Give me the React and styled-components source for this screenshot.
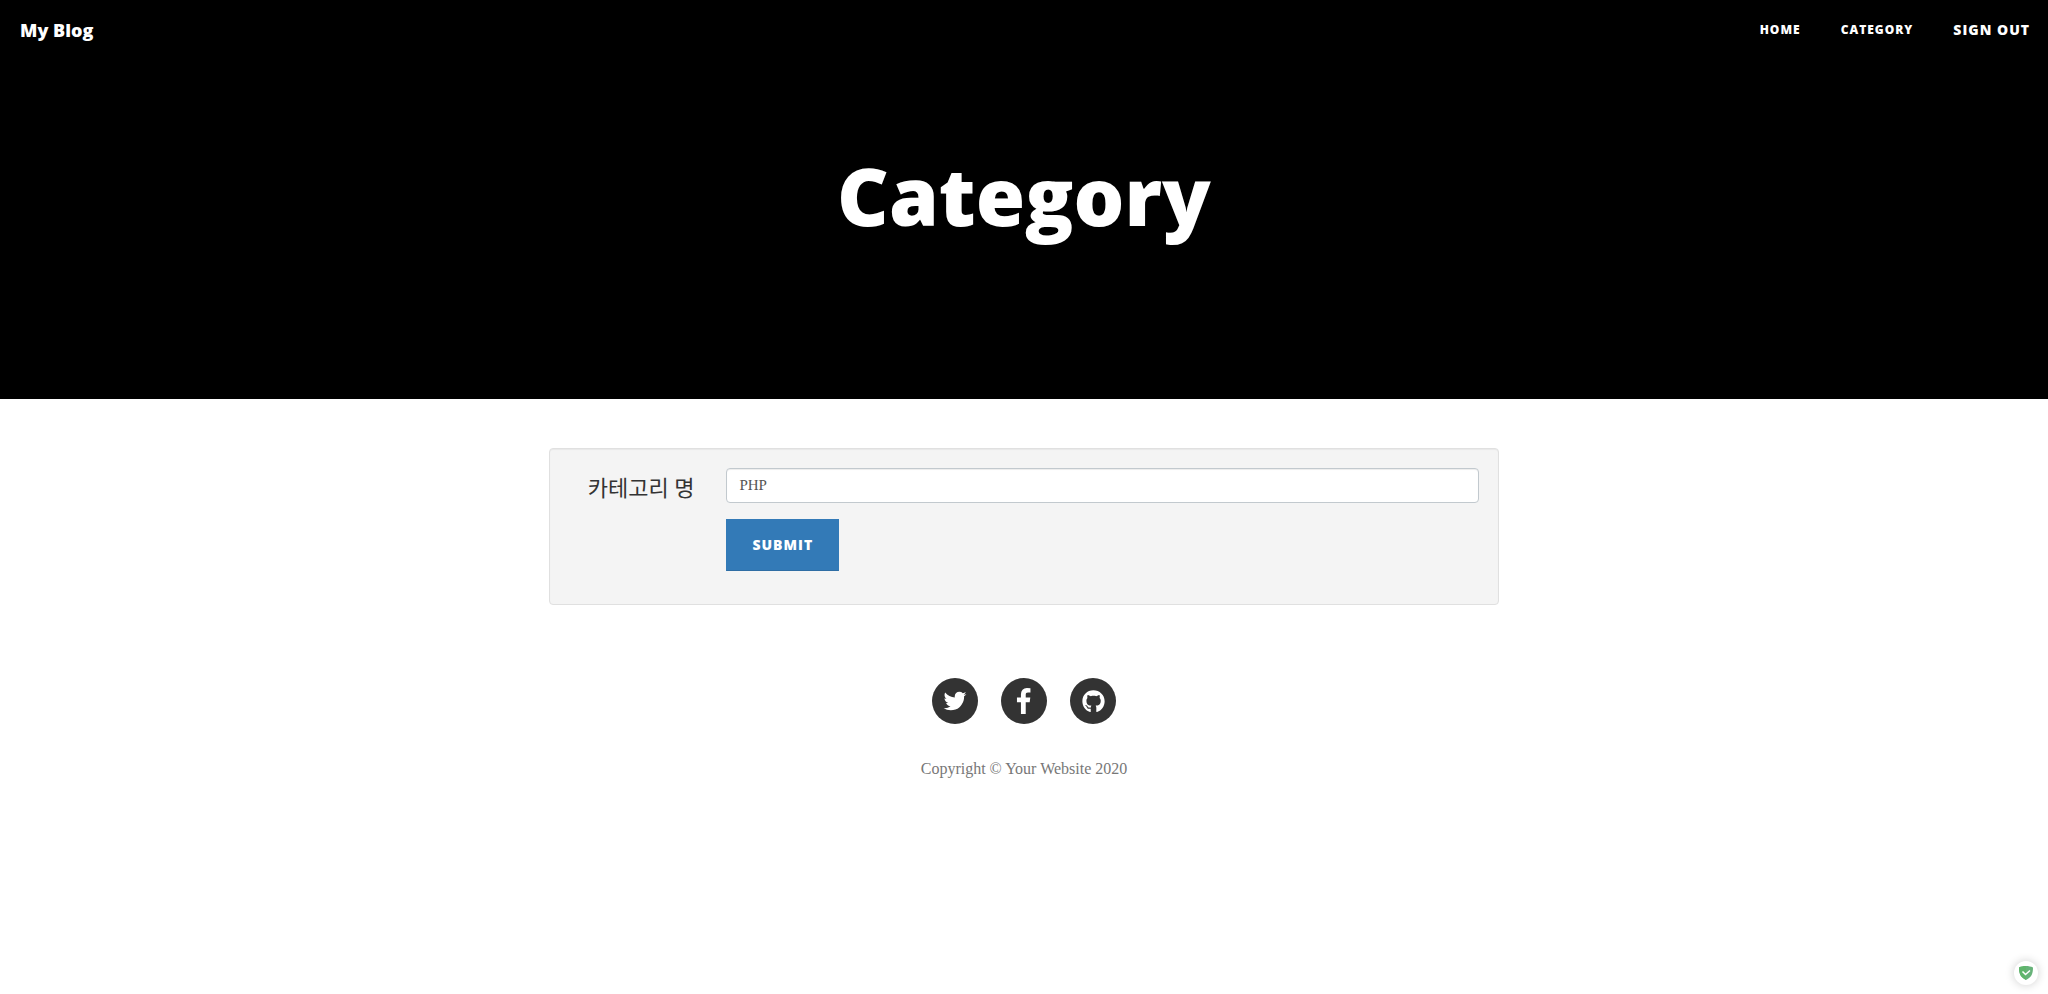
import React from "react";
import styled, { createGlobalStyle, css } from "styled-components";
import { FaGithub } from "react-icons/fa";

const GlobalStyle = createGlobalStyle`
  *, *::before, *::after { box-sizing: border-box; }
  body {
    margin: 0;
    background: #fff;
    color: #333;
    font-family: "Liberation Serif", "Noto Sans CJK KR", serif;
    font-size: 20px;
  }
`;

const display = css`
  font-family: "Open Sans", sans-serif;
  font-weight: 800;
`;

const Masthead = styled.header`
  background: #000;
  color: #fff;
`;

const NavBar = styled.nav`
  ${display}
  display: flex;
  align-items: center;
  justify-content: space-between;
  height: 60px;
  padding: 0 18px 0 20px;
`;

const Brand = styled.a`
  color: #fff;
  font-size: 18px;
  line-height: 20px;
  text-decoration: none;
`;

const NavList = styled.ul`
  display: flex;
  align-items: center;
  gap: 40px;
  margin: 0;
  padding: 0;
  list-style: none;
`;

const NavLink = styled.a`
  display: block;
  color: #fff;
  font-size: ${(p) => (p.$large ? 14 : 12)}px;
  line-height: 20px;
  letter-spacing: 1px;
  text-transform: uppercase;
  text-decoration: none;
`;

const Title = styled.h1`
  ${display}
  margin: 0;
  padding: 91px 16px 160px;
  font-size: 80px;
  line-height: 88px;
  text-align: center;
`;

const Main = styled.main`
  max-width: 982px;
  margin: 0 auto;
  padding: 49px 16px 0;
`;

const Well = styled.form`
  display: grid;
  grid-template-columns: 1fr 6fr;
  column-gap: 32px;
  row-gap: 16px;
  padding: 19px 19px 33px;
  background: #f4f4f4;
  border: 1px solid #e0e0e0;
  border-radius: 4px;
  box-shadow: inset 0 1px 1px rgba(0, 0, 0, 0.05);
`;

const Label = styled.label`
  padding-top: 7px;
  font-size: 22px;
  line-height: 28px;
  text-align: right;
  white-space: nowrap;
`;

const Field = styled.input`
  width: 100%;
  height: 35px;
  padding: 6px 12px;
  border: 1px solid #c2c9ce;
  border-radius: 4px;
  background: #fff;
  box-shadow: inset 0 1px 1px rgba(0, 0, 0, 0.075);
  color: #555;
  font: inherit;
  font-size: 15px;
`;

const Submit = styled.button`
  ${display}
  grid-column: 2;
  justify-self: start;
  padding: 15px 25px;
  border: 1px solid #337ab7;
  border-bottom-color: #2e6da4;
  background: #337ab7;
  color: #fff;
  font-size: 14px;
  line-height: 20px;
  letter-spacing: 1px;
  text-transform: uppercase;
`;

const Footer = styled.footer`
  display: flex;
  flex-direction: column;
  align-items: center;
  gap: 33px;
  padding: 73px 16px 65px;
`;

const Socials = styled.ul`
  display: flex;
  gap: 23px;
  margin: 0;
  padding: 0;
  list-style: none;
`;

const SocialLink = styled.a`
  display: flex;
  align-items: center;
  justify-content: center;
  width: 46px;
  height: 46px;
  border-radius: 50%;
  background: #333;
  color: #fff;

  svg {
    width: ${(p) => p.$iconSize}px;
    height: ${(p) => p.$iconSize}px;
    fill: currentColor;
  }
`;

const Copyright = styled.p`
  margin: 0;
  color: #777;
  font-size: 16px;
  line-height: 24px;
`;

const ShieldBadge = styled.button`
  position: fixed;
  right: 10px;
  bottom: 9px;
  display: flex;
  align-items: center;
  justify-content: center;
  width: 24px;
  height: 24px;
  padding: 0;
  border: 0;
  border-radius: 50%;
  background: #fff;
  box-shadow: 0 0 10px rgba(0, 0, 0, 0.2);
`;

const TwitterIcon = () => (
  <svg viewBox="0 0 1792 1792" aria-hidden="true">
    <path d="M1684 408q-67 98-162 167 1 14 1 42 0 130-38 259.500t-115.500 248.500-184.500 210.500-258 146-323 54.500q-271 0-496-145 35 4 78 4 225 0 401-138-105-2-188-64.500t-114-159.500q33 5 61 5 43 0 85-11-112-23-185.500-111.500t-73.500-205.500v-4q68 38 146 41-66-44-105-115t-39-154q0-88 44-163 121 149 294.500 238.500t371.500 99.500q-8-38-8-74 0-134 94.500-228.500t228.500-94.500q140 0 236 102 109-21 205-78-37 115-142 178 93-10 186-50z" />
  </svg>
);

const FacebookIcon = () => (
  <svg viewBox="-350 -70 1792 1792" aria-hidden="true">
    <path d="M959 12v264h-157q-86 0-116 36t-30 108v189h293l-39 296h-254v759h-306v-759h-255v-296h255v-218q0-186 104-288.500t277-102.500q147 0 228 12z" />
  </svg>
);

const ShieldIcon = () => (
  <svg width="16" height="16" viewBox="0 0 16 16" aria-hidden="true">
    <path d="M8 1C5.500 1 3 1.500 1 2.500C1 8 2 12 8 15C14 12 15 8 15 2.500C13 1.500 10.500 1 8 1Z" fill="#67b279" />
    <path d="M8 1C5.500 1 3 1.500 1 2.500C1 8 2 12 8 15Z" fill="#5fb56b" />
    <path d="M4.500 6.500L7.500 9.500L12 5.500" fill="none" stroke="#fff" strokeWidth="1.500" />
  </svg>
);

const links = [
  { text: "Home" },
  { text: "Category" },
  { text: "Sign out", large: true },
];

const socials = [
  { name: "Twitter", Icon: TwitterIcon, size: 26 },
  { name: "Facebook", Icon: FacebookIcon, size: 28 },
  { name: "GitHub", Icon: FaGithub, size: 23 },
];

export default function App() {
  return (
    <>
      <GlobalStyle />
      <Masthead>
        <NavBar>
          <Brand href="#">My Blog</Brand>
          <NavList>
            {links.map(({ text, large }) => (
              <li key={text}>
                <NavLink href="#" $large={large}>{text}</NavLink>
              </li>
            ))}
          </NavList>
        </NavBar>
        <Title>Category</Title>
      </Masthead>
      <Main>
        <Well onSubmit={(e) => e.preventDefault()}>
          <Label htmlFor="category-name">카테고리 명</Label>
          <Field id="category-name" type="text" defaultValue="PHP" />
          <Submit type="submit">Submit</Submit>
        </Well>
      </Main>
      <Footer>
        <Socials>
          {socials.map(({ name, Icon, size }) => (
            <li key={name}>
              <SocialLink href="#" aria-label={name} $iconSize={size}>
                <Icon />
              </SocialLink>
            </li>
          ))}
        </Socials>
        <Copyright>Copyright © Your Website 2020</Copyright>
      </Footer>
      <ShieldBadge type="button" aria-label="Protection status">
        <ShieldIcon />
      </ShieldBadge>
    </>
  );
}
